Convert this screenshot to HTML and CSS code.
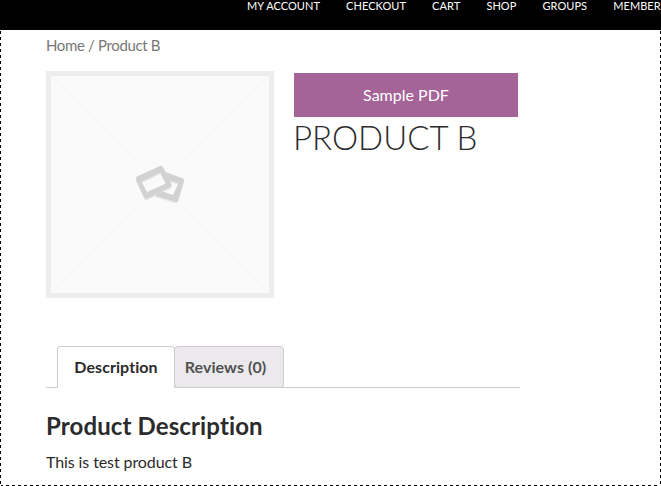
FILE: index.html
```html
<!DOCTYPE html>
<html lang="en">
<head>
<meta charset="utf-8">
<title>Product B</title>
<link rel="stylesheet" href="styles.css">
</head>
<body>
<nav class="site-nav">
  <a>MY ACCOUNT</a><a>CHECKOUT</a><a>CART</a><a>SHOP</a><a>GROUPS</a><a>MEMBER</a>
</nav>
<main class="page">
  <div class="breadcrumb">Home / Product B</div>
  <section class="product">
    <div class="product-image">
      <svg viewBox="0 0 218 218" width="218" height="218">
        <g stroke="#f0f0f0" stroke-width="1">
          <path d="M0 0L84 84M218 0L133 85M0 218L86 132M218 218L133 133"/>
        </g>
        <g fill="#e4e4e4" fill-rule="evenodd" transform="translate(0 1.500)">
          <path d="M87 100L109 90Q111 89 112 91L120.500 108Q121 110 119.500 111L96 122.500Q94 123 93 121L85 103.500Q84.500 101 87 100ZM90.500 105.500L96 116L115 107.500L109.500 96.500Z"/>
          <path d="M114.500 96L132 102.500Q133.500 103 133 105L127 124.500Q126 126 124 125.500L104 119.500L110 115L122 119L127.500 107L119 104.500Z"/>
        </g>
        <g fill="#d2d2d2" fill-rule="evenodd">
          <path d="M87 100L109 90Q111 89 112 91L120.500 108Q121 110 119.500 111L96 122.500Q94 123 93 121L85 103.500Q84.500 101 87 100ZM90.500 105.500L96 116L115 107.500L109.500 96.500Z"/>
          <path d="M114.500 96L132 102.500Q133.500 103 133 105L127 124.500Q126 126 124 125.500L104 119.500L110 115L122 119L127.500 107L119 104.500Z"/>
        </g>
      </svg>
    </div>
    <div class="summary">
      <a class="button">Sample PDF</a>
      <h1>PRODUCT B</h1>
    </div>
  </section>
  <div class="tabs">
    <div class="tab active">Description</div>
    <div class="tab reviews">Reviews (0)</div>
  </div>
  <h2>Product Description</h2>
  <p>This is test product B</p>
</main>
</body>
</html>
```
FILE: styles.css
```css
* { box-sizing: border-box; }
body {
  margin: 0;
  height: 486px;
  overflow: hidden;
  background: #fff;
  color: #2b2b2b;
  font-family: Lato, sans-serif;
  font-size: 16px;
  font-variant-ligatures: none;
}
.site-nav {
  display: flex;
  gap: 26.2px;
  height: 30px;
  padding-left: 247px;
  overflow: hidden;
  background: #000;
  color: #fff;
  font-size: 11px;
  letter-spacing: .04px;
  line-height: 11px;
  white-space: nowrap;
}
.page {
  height: 456px;
  padding: 5px 141px 0 46px;
  background:
    repeating-linear-gradient(to bottom, #000 0 3px, #fff 3px 6px) 0 1px / 1px 100% no-repeat,
    repeating-linear-gradient(to bottom, #000 0 3px, #fff 3px 6px) 100% 1px / 1px 100% no-repeat,
    repeating-linear-gradient(to right, #000 0 3px, #fff 3px 6px) 0 100% / 100% 1px no-repeat;
}
.breadcrumb {
  height: 36px;
  color: #777;
  font-size: 15px;
  letter-spacing: -.35px;
  line-height: 20px;
}
.product {
  display: flex;
  gap: 20px;
  height: 275px;
}
.product-image {
  width: 228px;
  height: 227px;
  border: 5px solid #ededed;
  background: #fafafa;
  overflow: hidden;
}
.product-image svg { display: block; }
.summary {
  width: 224px;
  padding-top: 2px;
}
.button {
  display: block;
  height: 44px;
  background: #a46497;
  color: #fff;
  line-height: 44px;
  text-align: center;
}
h1 {
  margin: 0 0 0 -1px;
  font-size: 33px;
  font-weight: 300;
  line-height: 40px;
  white-space: nowrap;
}
.tabs {
  display: flex;
  height: 42px;
  padding-left: 11px;
  border-bottom: 1px solid #cfc8d0;
}
.tab {
  height: 42px;
  border: 1px solid #d0cbd1;
  border-radius: 4px;
  font-weight: 700;
  letter-spacing: .08px;
  line-height: 39px;
  text-align: center;
  white-space: nowrap;
}
.active {
  width: 118px;
  border-bottom-color: #fff;
  border-radius: 4px 4px 0 0;
  background: #fff;
}
.reviews {
  width: 110px;
  margin-left: -1px;
  padding-right: 7px;
  background: #ebe9eb;
  color: #515151;
}
h2 {
  margin: 23px 0 0;
  font-size: 24px;
  font-weight: 700;
  letter-spacing: .12px;
  line-height: 30px;
}
p {
  margin: 11px 0 0;
  letter-spacing: -.1px;
  line-height: 20px;
}
```
